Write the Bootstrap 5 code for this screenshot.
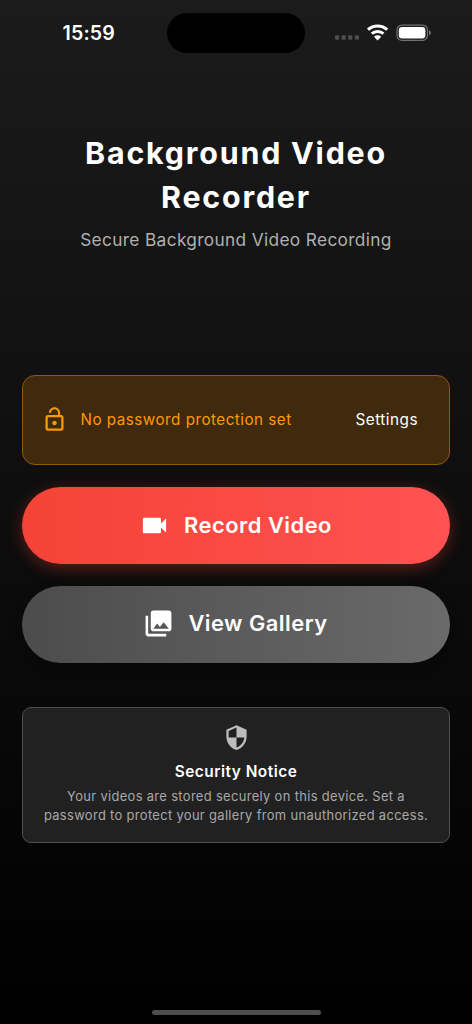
<!DOCTYPE html>
<html lang="en">
<head>
<meta charset="utf-8">
<meta name="viewport" content="width=device-width, initial-scale=1">
<title>Background Video Recorder</title>
<link href="https://cdn.jsdelivr.net/npm/bootstrap@5.3.0/dist/css/bootstrap.min.css" rel="stylesheet">
<style>
  body { font-family: Inter, "Liberation Sans", sans-serif; background: #000; color: #fff; }
  .screen { height: 1024px; padding: 0 22px; background: linear-gradient(180deg, #1b1b1b, #000); }
  .statusbar { height: 65px; margin: 0 -22px; }
  .clock { width: 167px; padding-left: 62.5px; font-size: 19.6px; font-weight: 600; letter-spacing: .15px; line-height: 24px; padding-top: 1px; }
  .island { width: 138px; height: 40px; margin-top: 1px; background: #000; }
  .indicators { padding-left: 30px; }
  .app-title { margin-top: 66px; font-size: 30.4px; font-weight: 700; line-height: 44px; letter-spacing: 1.8px; }
  .tagline { margin-top: 9px; font-size: 17.3px; line-height: 24px; letter-spacing: .34px; color: #b0b0b0; }
  .lock-card { margin-top: 123px; height: 90px; padding: 0 31px 0 17.5px; background: #3f2a0d; border: 1px solid #905a06; border-radius: 13px; color: #ff9800; font-size: 15.2px; }
  .lock-card svg { margin-top: -1px; }
  .lock-card .label-text { margin-left: 13px; padding-top: 1px; font-weight: 400; letter-spacing: .5px; }
  .lock-card .settings { padding-top: 1px; color: #fff; font-weight: 400; font-size: 15.3px; letter-spacing: .5px; }
  .action { height: 77px; border: 0; font-size: 21.9px; font-weight: 600; color: #fff; letter-spacing: .48px; }
  .record { margin-top: 21.7px; gap: 14px; background: linear-gradient(90deg, #f44336, #ff5252); box-shadow: 0 4px 16px rgba(244,67,54,.34); }
  .gallery { margin-top: 22px; gap: 14px; background: linear-gradient(90deg, #4c4c4c, #6a6a6a); box-shadow: 0 4px 13px rgba(0,0,0,.3); }
  .record svg, .gallery svg { margin-left: -1px; }
  .gallery svg { margin-top: -1px; }
  .gallery span { margin-top: -1px; }
  .notice { margin-top: 44px; height: 136px; padding-top: 16.4px; background: #212121; border: 1px solid #4f4f4f; border-radius: 9px; }
  .notice h2 { margin: 10.6px 0 0; font-size: 15.4px; line-height: 20px; font-weight: 600; letter-spacing: .5px; }
  .notice p { margin: 6.3px 0 0; font-size: 12.9px; line-height: 18.7px; letter-spacing: .35px; color: #a8a8a8; }
  .homebar { width: 169px; height: 5.5px; margin-bottom: 9px; background: #4e4e4e; }
</style>
</head>
<body>
<main class="screen d-flex flex-column overflow-hidden">
  <header class="statusbar d-flex align-items-center flex-shrink-0">
    <div class="clock">15:59</div>
    <div class="island rounded-pill"></div>
    <div class="indicators d-flex align-items-center">
      <svg width="100" height="24" viewBox="0 0 100 24">
        <g fill="#4d4d4d"><rect x="0" y="14.200" width="4.200" height="4.600" rx="1.200"/><rect x="6.600" y="14.200" width="4.200" height="4.600" rx="1.200"/><rect x="13.200" y="14.200" width="4.200" height="4.600" rx="1.200"/><rect x="19.800" y="14.200" width="4.200" height="4.600" rx="1.200"/></g>
        <g fill="none" stroke="#fff" stroke-width="3"><path d="M33 8.700a14.200 14.200 0 0 1 19.200 0"/><path d="M36.800 12.600a8.700 8.700 0 0 1 11.600 0"/></g>
        <path fill="#fff" d="M39 15.700a5.100 5.100 0 0 1 7.200 0l-3.600 3.700z"/>
        <rect x="62" y="4.100" width="30.500" height="15.200" rx="4.800" fill="none" stroke="#727272" stroke-width="1.200"/>
        <rect x="63.800" y="6" width="26.600" height="11.400" rx="3.200" fill="#fff"/>
        <path d="M94 9.200q2 .6 2 2.500t-2 2.500z" fill="#727272"/>
      </svg>
    </div>
  </header>

  <h1 class="app-title text-center mb-0">Background Video<br>Recorder</h1>
  <p class="tagline text-center mb-0">Secure Background Video Recording</p>

  <section class="lock-card d-flex align-items-center flex-shrink-0">
    <svg width="27" height="27" viewBox="0 0 24 24" fill="currentColor"><path d="M12 17c1.100 0 2-.9 2-2s-.9-2-2-2-2 .9-2 2 .9 2 2 2zm6-9h-1V6c0-2.760-2.240-5-5-5S7 3.240 7 6h1.900c0-1.710 1.390-3.100 3.100-3.100 1.710 0 3.100 1.390 3.100 3.100v2H6c-1.100 0-2 .9-2 2v10c0 1.100.9 2 2 2h12c1.100 0 2-.9 2-2V10c0-1.100-.9-2-2-2zm0 12H6V10h12v10z"/></svg>
    <span class="label-text flex-grow-1">No password protection set</span>
    <a href="#" class="settings text-decoration-none">Settings</a>
  </section>

  <button type="button" class="action record btn rounded-pill d-flex align-items-center justify-content-center flex-shrink-0 p-0">
    <svg width="31" height="31" viewBox="0 0 24 24" fill="#fff"><path d="M17 10.500V7c0-.55-.45-1-1-1H4c-.55 0-1 .45-1 1v10c0 .55.45 1 1 1h12c.55 0 1-.45 1-1v-3.500l4 4v-11l-4 4z"/></svg>
    <span>Record Video</span>
  </button>
  <button type="button" class="action gallery btn rounded-pill d-flex align-items-center justify-content-center flex-shrink-0 p-0">
    <svg width="31" height="31" viewBox="0 0 24 24" fill="#fff"><path d="M22 16V4c0-1.100-.9-2-2-2H8c-1.100 0-2 .9-2 2v12c0 1.100.9 2 2 2h12c1.100 0 2-.9 2-2zm-11-4l2.030 2.710L16 11l4 5H8l3-4zM2 6v14c0 1.100.9 2 2 2h14v-2H4V6H2z"/></svg>
    <span>View Gallery</span>
  </button>

  <section class="notice text-center flex-shrink-0">
    <svg class="d-block mx-auto" width="27" height="27" viewBox="0 0 24 24" fill="#bdbdbd"><path d="M12 1L3 5v6c0 5.550 3.840 10.740 9 12 5.160-1.260 9-6.450 9-12V5l-9-4zm0 10.990h7c-.53 4.120-3.280 7.790-7 8.940V12H5V6.300l7-3.110v8.800z"/></svg>
    <h2>Security Notice</h2>
    <p>Your videos are stored securely on this device. Set a<br>password to protect your gallery from unauthorized access.</p>
  </section>

  <div class="homebar rounded-pill mx-auto mt-auto flex-shrink-0"></div>
</main>
<script src="https://cdn.jsdelivr.net/npm/bootstrap@5.3.0/dist/js/bootstrap.bundle.min.js"></script>
</body>
</html>
